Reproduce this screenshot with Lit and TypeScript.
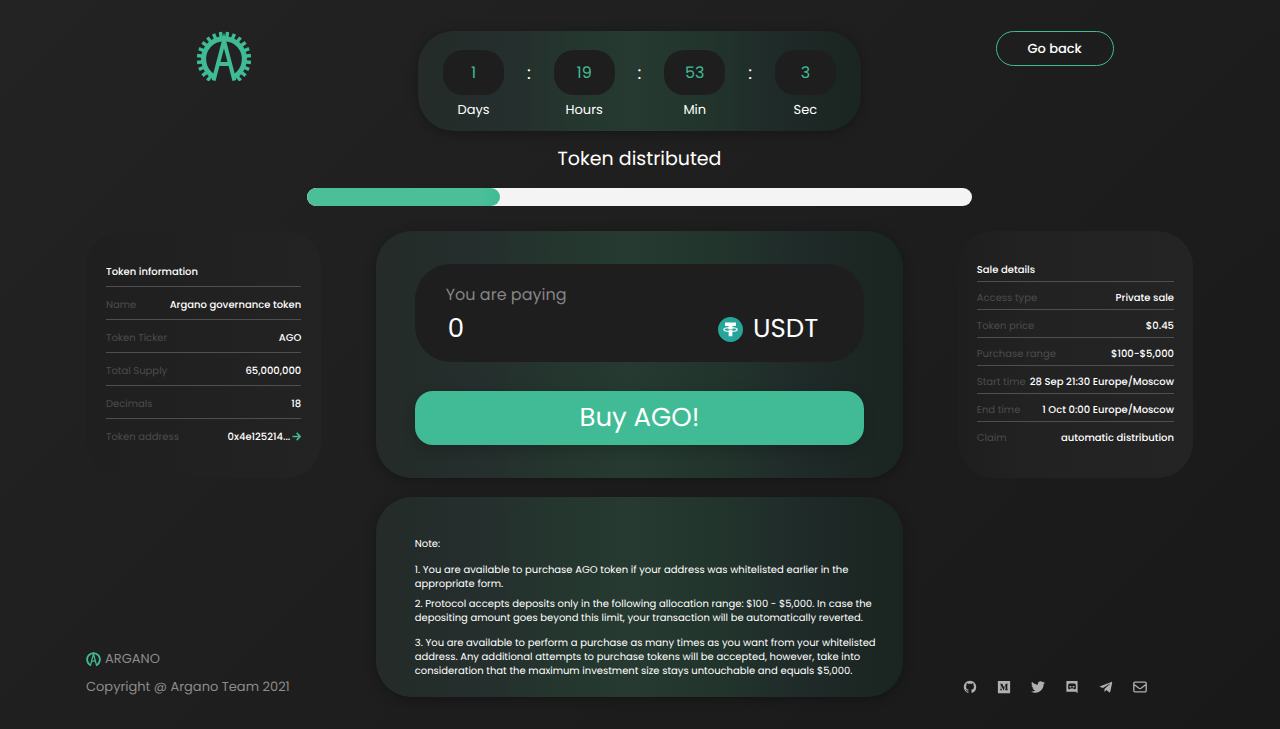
import { LitElement, html, svg, css } from "lit";
import { customElement, property, state } from "lit/decorators.js";

interface Row {
  label: string;
  value: string;
  href?: string;
}

const TEETH = Array.from({ length: 20 }, (_, i) => -142.5 + i * 15);

@customElement("argano-logo")
export class ArganoLogo extends LitElement {
  @property({ type: Boolean, reflect: true }) plain = false;

  static styles = css`
    :host {
      display: block;
    }
    .mark {
      display: block;
      width: 100%;
      height: auto;
      stroke: #3fbb95;
      fill: none;
    }
    .ring {
      stroke-width: 5;
    }
    .tooth {
      stroke-width: 3.4;
    }
    .letter {
      stroke-width: 4;
    }
    :host([plain]) .ring {
      stroke-width: 6;
    }
  `;

  render() {
    return html`
      <svg class="mark" viewBox=${this.plain ? "4 4 48 47" : "0 0 56 50"} aria-hidden="true">
        <path class="ring" d="M17.6 45.6A20.4 20.4 0 1 1 38.4 45.6" />
        ${this.plain
          ? ""
          : TEETH.map(
              (a) => svg`<path class="tooth" d="M28 .8V7" transform="rotate(${a} 28 28)" />`
            )}
        <path class="letter" d="M17.6 49.4L28 9.5L38.4 49.4M22.4 33H33.6" />
      </svg>
    `;
  }
}

@customElement("count-down")
export class CountDown extends LitElement {
  @property({ attribute: false }) parts: { label: string; value: number }[] = [];

  static styles = css`
    :host {
      display: block;
    }
    .timer {
      box-sizing: border-box;
      display: flex;
      justify-content: space-between;
      padding: 19px 25px 11px;
      border-radius: 36px;
      background: var(--panel);
      box-shadow: var(--panel-shadow);
    }
    .part {
      display: grid;
      width: 61px;
      text-align: center;
      gap: 5px;
    }
    .value {
      border-radius: 20px;
      background: #1e1e1e;
      color: #3fbb95;
      font-size: 16px;
      line-height: 45px;
    }
    .label {
      font-size: 13px;
      line-height: 20px;
    }
    .colon {
      font-size: 18px;
      line-height: 48px;
    }
  `;

  render() {
    return html`
      <div class="timer" role="timer">
        ${this.parts.map(
          (p, i) => html`
            ${i ? html`<span class="colon">:</span>` : ""}
            <div class="part">
              <span class="value">${p.value}</span>
              <span class="label">${p.label}</span>
            </div>
          `
        )}
      </div>
    `;
  }
}

@customElement("info-panel")
export class InfoPanel extends LitElement {
  @property() heading = "";
  @property({ attribute: false }) rows: Row[] = [];
  @property({ type: Boolean, reflect: true }) compact = false;

  static styles = css`
    :host {
      display: block;
      --row: 33px;
      --drop: 3px;
    }
    :host([compact]) {
      --row: 28px;
      --drop: 5px;
    }
    .panel {
      box-sizing: border-box;
      height: 100%;
      padding: 23px 20px;
      border-radius: 36px;
      background: linear-gradient(90deg, #1f1f1f, #232323);
      font-size: 10px;
      line-height: 16px;
    }
    :host([compact]) .panel {
      padding: 23px 19px;
      background: linear-gradient(90deg, #1e1e1e, #222222 30%, #242424);
    }
    .heading,
    .row {
      box-sizing: border-box;
      display: flex;
      align-items: center;
      justify-content: space-between;
      height: var(--row);
      padding-top: var(--drop);
      border-bottom: 1px solid #4f4f4f;
      font-weight: 500;
      white-space: nowrap;
    }
    .heading,
    .list {
      margin: 0;
      font-size: 10px;
    }
    .row:last-child {
      border-bottom-color: transparent;
    }
    .label {
      font-weight: 400;
      color: #4c4c4c;
    }
    .value {
      margin: 0;
    }
    .link {
      display: flex;
      align-items: center;
      gap: 2px;
      color: inherit;
      text-decoration: none;
    }
    .arrow {
      width: 9px;
      height: 9px;
      fill: none;
      stroke: #3fbb95;
      stroke-width: 1.7;
    }
  `;

  render() {
    return html`
      <section class="panel">
        <h2 class="heading">${this.heading}</h2>
        <dl class="list">
          ${this.rows.map(
            (r) => html`
              <div class="row">
                <dt class="label">${r.label}</dt>
                <dd class="value">
                  ${r.href
                    ? html`<a class="link" href=${r.href}
                        >${r.value}<svg class="arrow" viewBox="0 0 10 10" aria-hidden="true">
                          <path d="M0.5 5H9M5.2 1L9 5L5.2 9" />
                        </svg>
                      </a>`
                    : r.value}
                </dd>
              </div>
            `
          )}
        </dl>
      </section>
    `;
  }
}

const SOCIAL = [
  {
    name: "GitHub",
    box: "-1 -1 18 18",
    icon: svg`<path d="M8 0C3.58 0 0 3.58 0 8c0 3.54 2.29 6.53 5.47 7.59.4.07.55-.17.55-.38 0-.19-.01-.82-.01-1.49-2.01.37-2.53-.49-2.69-.94-.09-.23-.48-.94-.82-1.13-.28-.15-.68-.52-.01-.53.63-.01 1.08.58 1.23.82.72 1.21 1.87.87 2.33.66.07-.52.28-.87.51-1.07-1.78-.2-3.64-.89-3.64-3.95 0-.87.31-1.59.82-2.15-.08-.2-.36-1.02.08-2.12 0 0 .67-.21 2.2.82.64-.18 1.32-.27 2-.27s1.36.09 2 .27c1.53-1.04 2.2-.82 2.2-.82.44 1.1.16 1.92.08 2.12.51.56.82 1.27.82 2.15 0 3.07-1.87 3.75-3.65 3.95.29.25.54.73.54 1.48 0 1.07-.01 1.93-.01 2.2 0 .21.15.46.55.38A8.01 8.01 0 0 0 16 8c0-4.42-3.58-8-8-8z" />`,
  },
  {
    name: "Medium",
    box: "-32 0 512 512",
    icon: svg`<path d="M0 32v448h448V32H0zm372.2 106.1l-24 23c-2.1 1.6-3.1 4.2-2.7 6.7v169.3c-.4 2.6.6 5.2 2.7 6.7l23.5 23v5.1h-118V367l24.3-23.6c2.4-2.4 2.4-3.1 2.4-6.7V199.8l-67.6 171.6h-9.1L125 199.8v115c-.7 4.8 1 9.7 4.4 13.2l31.6 38.3v5.1H71.2v-5.1l31.6-38.3c3.4-3.5 4.9-8.4 4.1-13.2v-133c.4-3.7-1-7.3-3.8-9.8L75 138.1V133h87.3l67.4 148L289 133.1h83.2v5z" />`,
  },
  {
    name: "Twitter",
    box: "0 0 512 512",
    icon: svg`<path d="M459.37 151.716c.325 4.548.325 9.097.325 13.645 0 138.72-105.583 298.558-298.558 298.558-59.452 0-114.68-17.219-161.137-47.106 8.447.974 16.568 1.299 25.34 1.299 49.055 0 94.213-16.568 130.274-44.832-46.132-.975-84.792-31.188-98.112-72.772 6.498.974 12.995 1.624 19.818 1.624 9.421 0 18.843-1.3 27.614-3.573-48.081-9.747-84.143-51.98-84.143-102.985v-1.299c13.969 7.797 30.214 12.67 47.431 13.319-28.264-18.843-46.781-51.005-46.781-87.391 0-19.492 5.197-37.36 14.294-52.954 51.655 63.675 129.3 105.258 216.365 109.807-1.624-7.797-2.599-15.918-2.599-24.04 0-57.828 46.782-104.934 104.934-104.934 30.213 0 57.502 12.67 76.67 33.137 23.715-4.548 46.456-13.32 66.599-25.34-7.798 24.366-24.366 44.833-46.132 57.827 21.117-2.273 41.584-8.122 60.426-16.243-14.292 20.791-32.161 39.308-52.628 54.253z" />`,
  },
  {
    name: "Discord",
    box: "0 0 14 14",
    icon: svg`<path fill-rule="evenodd" d="M1.4 1H12.6V13.2L10.8 11.8H1.4ZM3.1 8.6V6.2Q3.1 4 4.3 3.6H9.7Q10.9 4 10.9 6.2V8.6Q10.3 9.4 9.2 9.4L8.6 8.6H5.4L4.8 9.4Q3.7 9.4 3.1 8.6ZM4.6 6V7.5H6.3V6ZM7.7 6V7.5H9.4V6Z" />`,
  },
  {
    name: "Telegram",
    box: "-24 -2 500 500",
    icon: svg`<path d="M446.7 98.6l-67.6 318.8c-5.1 22.5-18.4 28.1-37.3 17.5l-103-75.9-49.7 47.8c-5.5 5.5-10.1 10.1-20.7 10.1l7.4-104.9 190.9-172.5c8.3-7.4-1.8-11.5-12.9-4.1L117.8 284 16.2 252.2c-22.1-6.9-22.5-22.1 4.6-32.7L418.2 66.4c18.4-6.9 34.5 4.1 28.5 32.2z" />`,
  },
  {
    name: "E-mail",
    box: "0 0 14 14",
    icon: svg`<path d="M2 2.2H12A1.2 1.2 0 0 1 13.2 3.4V10.6A1.2 1.2 0 0 1 12 11.8H2A1.2 1.2 0 0 1 .8 10.6V3.4A1.2 1.2 0 0 1 2 2.2ZM1 4.6L6 8.3Q7 9 8 8.3L13 4.6" fill="none" stroke="currentColor" stroke-width="1.3" />`,
  },
];

@customElement("app-root")
export class AppRoot extends LitElement {
  @state() private amount = "0";
  private distributed = 29;

  private countdown = [
    { label: "Days", value: 1 },
    { label: "Hours", value: 19 },
    { label: "Min", value: 53 },
    { label: "Sec", value: 3 },
  ];

  private token: Row[] = [
    { label: "Name", value: "Argano governance token" },
    { label: "Token Ticker", value: "AGO" },
    { label: "Total Supply", value: "65,000,000" },
    { label: "Decimals", value: "18" },
    { label: "Token address", value: "0x4e125214...", href: "#token" },
  ];

  private sale: Row[] = [
    { label: "Access type", value: "Private sale" },
    { label: "Token price", value: "$0.45" },
    { label: "Purchase range", value: "$100-$5,000" },
    { label: "Start time", value: "28 Sep 21:30 Europe/Moscow" },
    { label: "End time", value: "1 Oct 0:00 Europe/Moscow" },
    { label: "Claim", value: "automatic distribution" },
  ];

  static styles = css`
    :host {
      --panel: linear-gradient(
        90deg,
        #242b29 0%,
        #252f2d 22%,
        #24362e 34%,
        #263a31 48%,
        #22352c 64%,
        #202c2a 78%,
        #1a2421 100%
      );
      --panel-shadow: 0 2px 12px rgba(0, 0, 0, 0.3);
      box-sizing: border-box;
      display: flex;
      flex-direction: column;
      min-height: 100vh;
      padding: 31px 87px 32px 86px;
      background: linear-gradient(135deg, #232323 0%, #1d1d1d 60%, #191919 100%);
      color: #ffffff;
      font-family: Poppins, Inter, sans-serif;
      font-size: 13px;
      text-rendering: geometricPrecision;
    }
    .top,
    .main {
      display: grid;
      grid-template-columns: minmax(0, 1fr) minmax(0, 2fr) minmax(0, 1fr);
    }
    .top {
      justify-items: center;
      align-items: start;
    }
    .logo {
      width: 56px;
    }
    .timer {
      width: 80%;
    }
    .back {
      box-sizing: border-box;
      width: 118px;
      height: 35px;
      border: 1px solid #3fbb95;
      border-radius: 18px;
      background: none;
      color: inherit;
      font: 500 13px/20px Poppins, Inter, sans-serif;
      text-rendering: inherit;
    }
    .title {
      margin: 13px 0 14px;
      text-align: center;
      font-size: 19px;
      line-height: 30px;
      font-weight: 400;
    }
    .bar {
      align-self: center;
      width: 60%;
      height: 18px;
      border-radius: 9px;
      background: #f4f4f4;
      overflow: hidden;
    }
    .fill {
      height: 100%;
      border-radius: 9px;
      background: linear-gradient(90deg, #4abf98 90%, #3fbb95);
    }
    .main {
      margin-top: 25px;
      row-gap: 19px;
    }
    .side {
      width: 85%;
    }
    .right {
      justify-self: end;
    }
    .card {
      box-sizing: border-box;
      margin: 0 13px;
      padding: 33px 39px;
      border-radius: 36px;
      background: var(--panel);
      box-shadow: var(--panel-shadow);
    }
    .pay {
      display: grid;
      grid-template-columns: minmax(0, 1fr);
      gap: 4px;
      padding: 18px 46px 16px 31px;
      border-radius: 36px;
      background: #1e1e1e;
    }
    .pay-label {
      color: #858585;
      font-size: 16px;
      line-height: 26px;
    }
    .pay-row {
      display: flex;
      align-items: center;
      gap: 10px;
    }
    .amount {
      flex: 1;
      min-width: 0;
      height: 34px;
      padding: 0 2px;
      border: 0;
      outline: 0;
      background: none;
      color: inherit;
      font: 400 26px/34px Poppins, Inter, sans-serif;
      text-rendering: inherit;
    }
    .coin {
      width: 25px;
      height: 25px;
    }
    .unit {
      font-size: 26px;
      line-height: 34px;
    }
    .buy {
      display: block;
      width: 100%;
      height: 54px;
      margin-top: 29px;
      border: 0;
      border-radius: 18px;
      background: #40bb96;
      box-shadow: 0 4px 14px rgba(0, 0, 0, 0.2);
      color: inherit;
      font: 400 26px/34px Poppins, Inter, sans-serif;
      text-rendering: inherit;
    }
    .note {
      padding: 40px 24px 19px 39px;
      font-size: 10px;
      line-height: 14px;
    }
    .note-line {
      margin: 0 0 11px;
    }
    .note-line:first-child {
      margin-bottom: 12px;
    }
    .note-line.near {
      margin-bottom: 6px;
    }
    .note-line:last-child {
      margin-bottom: 0;
    }
    .foot {
      align-self: end;
      color: #8c8c8c;
      line-height: 20px;
    }
    .brand {
      display: flex;
      align-items: center;
      gap: 4px;
      margin-bottom: 8px;
    }
    .brand-logo {
      width: 15px;
    }
    .social {
      display: flex;
      justify-content: flex-end;
      gap: 20px;
      padding: 0 46px 3px 0;
      color: #b0b0b0;
    }
    .social-link {
      display: block;
      color: inherit;
    }
    .social-icon {
      display: block;
      width: 14px;
      height: 14px;
      fill: currentColor;
    }
  `;

  render() {
    return html`
      <header class="top">
        <argano-logo class="logo"></argano-logo>
        <count-down class="timer" .parts=${this.countdown}></count-down>
        <button class="back" type="button">Go back</button>
      </header>

      <h1 class="title" id="distributed">Token distributed</h1>
      <div
        class="bar"
        role="progressbar"
        aria-labelledby="distributed"
        aria-valuenow=${this.distributed}
      >
        <div class="fill" style="width:${this.distributed}%"></div>
      </div>

      <main class="main">
        <info-panel class="side" heading="Token information" .rows=${this.token}></info-panel>
        <form class="card" @submit=${(e: Event) => e.preventDefault()}>
          <div class="pay">
            <label class="pay-label" for="amount">You are paying</label>
            <div class="pay-row">
              <input
                class="amount"
                id="amount"
                type="text"
                inputmode="decimal"
                .value=${this.amount}
                @input=${(e: Event) => (this.amount = (e.target as HTMLInputElement).value)}
              />
              <svg class="coin" viewBox="0 0 32 32" aria-hidden="true">
                <circle cx="16" cy="16" r="16" fill="#26a69a" />
                <path fill="#fff" d="M9 7H23V11.4H18.4V24.6H13.6V11.4H9Z" />
                <ellipse
                  cx="16"
                  cy="16"
                  rx="8.6"
                  ry="2.4"
                  fill="none"
                  stroke="#fff"
                  stroke-width="1.6"
                />
                <path d="M10 16.2H22" stroke="#26a69a" stroke-width="1" />
                <path d="M13.6 13H18.4V15.6H13.6Z" fill="#fff" />
              </svg>
              <span class="unit">USDT</span>
            </div>
          </div>
          <button class="buy" type="submit">Buy AGO!</button>
        </form>
        <info-panel
          class="side right"
          compact
          heading="Sale details"
          .rows=${this.sale}
        ></info-panel>

        <footer class="foot">
          <div class="brand">
            <argano-logo class="brand-logo" plain></argano-logo>
            <span>ARGANO</span>
          </div>
          <div>Copyright @ Argano Team 2021</div>
        </footer>
        <section class="card note">
          <p class="note-line">Note:</p>
          <p class="note-line near">
            1. You are available to purchase AGO token if your address was whitelisted earlier in
            the appropriate form.
          </p>
          <p class="note-line">
            2. Protocol accepts deposits only in the following allocation range: $100 - $5,000. In
            case the depositing amount goes beyond this limit, your transaction will be
            automatically reverted.
          </p>
          <p class="note-line">
            3. You are available to perform a purchase as many times as you want from your
            whitelisted address. Any additional attempts to purchase tokens will be accepted,
            however, take into consideration that the maximum investment size stays untouchable and
            equals $5,000.
          </p>
        </section>
        <nav class="foot social" aria-label="Social">
          ${SOCIAL.map(
            (s) => html`<a class="social-link" href="#" aria-label=${s.name}
              ><svg class="social-icon" viewBox=${s.box} aria-hidden="true">${s.icon}</svg></a
            >`
          )}
        </nav>
      </main>
    `;
  }
}
